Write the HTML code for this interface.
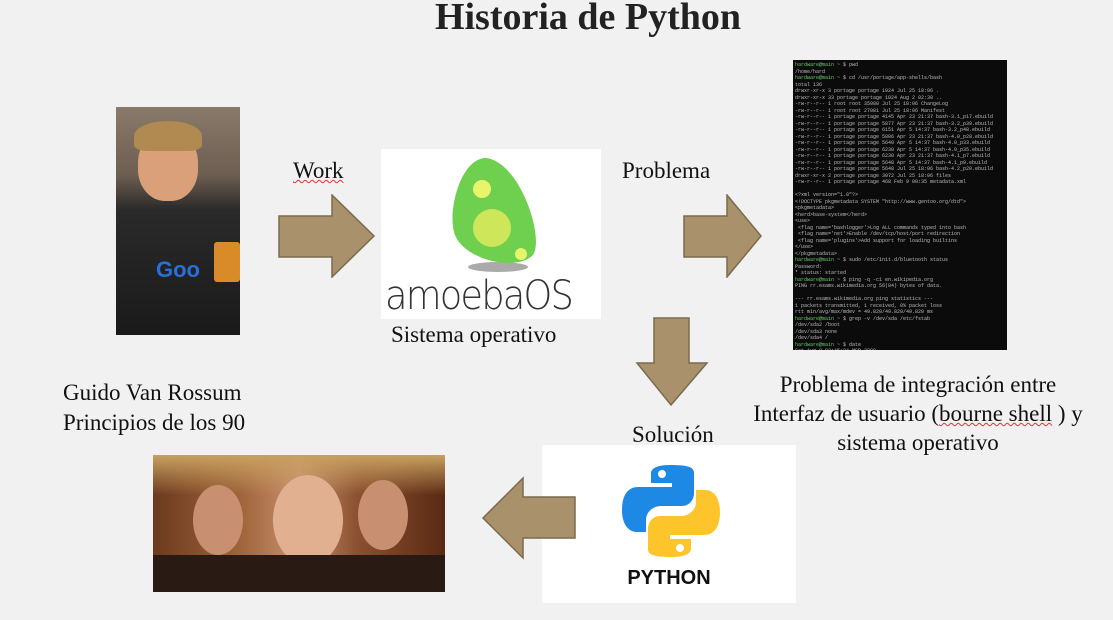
<!DOCTYPE html>
<html><head><meta charset="utf-8"><style>
body{margin:0;width:1113px;height:620px;background:#f1f1f1;position:relative;overflow:hidden;font-family:"Liberation Serif",serif;color:#111}
.t{position:absolute;font-size:23px;white-space:nowrap}
.a{position:absolute}
</style></head><body>
<div class="t" style="left:0;width:1176px;text-align:center;top:-5px;font-size:38px;font-weight:bold;color:#222">Historia de Python</div>

<div class="a" style="left:116px;top:107px;width:124px;height:228px;background:linear-gradient(180deg,#8a7a6a 0%,#6d5e52 30%,#2a2a2a 45%,#1a1a1a 100%)">
 <div class="a" style="left:22px;top:24px;width:60px;height:70px;border-radius:45%;background:#d9a07a"></div>
 <div class="a" style="left:18px;top:14px;width:68px;height:30px;border-radius:50% 50% 20% 20%;background:#b08a50"></div>
 <div class="a" style="left:40px;top:150px;color:#2a6fd8;font:bold 22px 'Liberation Sans',sans-serif">Goo</div>
 <div class="a" style="left:98px;top:135px;width:26px;height:40px;background:#d98b2a;border-radius:3px"></div>
</div>

<div class="t" style="left:293px;top:158px;text-decoration:underline wavy #d33 1px">Work</div>
<svg class="a" style="left:278px;top:194px" width="98" height="84"><polygon points="1,22 54,22 54,1 96,42 54,83 54,63 1,63" fill="#a8916b" stroke="#7b6a4e" stroke-width="1.5"/></svg>

<div class="a" style="left:381px;top:149px;width:220px;height:170px;background:#fff">
 <svg class="a" style="left:55px;top:5px" width="110" height="120"><ellipse cx="62" cy="113" rx="30" ry="5" fill="#555" opacity=".5"/>
 <path d="M50 4 C25 4 12 55 18 78 C25 105 78 118 96 102 C110 88 85 8 50 4Z" fill="#6fcf4f"/>
 <circle cx="56" cy="74" r="19" fill="#cde65a"/><circle cx="46" cy="35" r="9" fill="#e8f56a"/><circle cx="85" cy="100" r="6" fill="#e8f56a"/></svg>
 <div class="a" style="left:4px;top:124px;font:40px 'DejaVu Sans',sans-serif;font-weight:200;color:#333;letter-spacing:-2px;transform:scaleX(0.92);transform-origin:left">amoebaOS</div>
</div>
<div class="t" style="left:391px;top:322px">Sistema operativo</div>

<div class="t" style="left:622px;top:158px">Problema</div>
<svg class="a" style="left:683px;top:194px" width="80" height="84"><polygon points="1,22 44,22 44,1 78,42 44,83 44,63 1,63" fill="#a8916b" stroke="#7b6a4e" stroke-width="1.5"/></svg>

<div class="a" style="left:793px;top:60px;width:214px;height:290px;background:#0b0b0b;overflow:hidden;font:5px 'Liberation Mono',monospace;color:#bbb;line-height:6.5px;padding:2px;box-sizing:border-box">
<span style="color:#6c6">hardware@main</span> ~ $ pwd<br>/home/hard<br><span style="color:#6c6">hardware@main</span> ~ $ cd /usr/portage/app-shells/bash<br>total 136<br>drwxr-xr-x 3 portage portage 1024 Jul 25 18:06 .<br>drwxr-xr-x 33 portage portage 1024 Aug 2 02:30 ..<br>-rw-r--r-- 1 root root 35080 Jul 25 18:06 ChangeLog<br>-rw-r--r-- 1 root root 27081 Jul 25 18:06 Manifest<br>-rw-r--r-- 1 portage portage 4145 Apr 23 21:37 bash-3.1_p17.ebuild<br>-rw-r--r-- 1 portage portage 5877 Apr 23 21:37 bash-3.2_p39.ebuild<br>-rw-r--r-- 1 portage portage 6151 Apr 5 14:37 bash-3.2_p48.ebuild<br>-rw-r--r-- 1 portage portage 5806 Apr 23 21:37 bash-4.0_p28.ebuild<br>-rw-r--r-- 1 portage portage 5640 Apr 5 14:37 bash-4.0_p33.ebuild<br>-rw-r--r-- 1 portage portage 6230 Apr 5 14:37 bash-4.0_p35.ebuild<br>-rw-r--r-- 1 portage portage 6230 Apr 23 21:37 bash-4.1_p7.ebuild<br>-rw-r--r-- 1 portage portage 5648 Apr 5 14:37 bash-4.1_p9.ebuild<br>-rw-r--r-- 1 portage portage 5648 Jul 25 18:06 bash-4.2_p20.ebuild<br>drwxr-xr-x 2 portage portage 3072 Jul 25 18:06 files<br>-rw-r--r-- 1 portage portage 468 Feb 9 00:35 metadata.xml<br><br>&lt;?xml version="1.0"?&gt;<br>&lt;!DOCTYPE pkgmetadata SYSTEM "http://www.gentoo.org/dtd"&gt;<br>&lt;pkgmetadata&gt;<br>&lt;herd&gt;base-system&lt;/herd&gt;<br>&lt;use&gt;<br>&nbsp;&lt;flag name='bashlogger'&gt;Log ALL commands typed into bash<br>&nbsp;&lt;flag name='net'&gt;Enable /dev/tcp/host/port redirection<br>&nbsp;&lt;flag name='plugins'&gt;Add support for loading builtins<br>&lt;/use&gt;<br>&lt;/pkgmetadata&gt;<br><span style="color:#6c6">hardware@main</span> ~ $ sudo /etc/init.d/bluetooth status<br>Password:<br>* status: started<br><span style="color:#6c6">hardware@main</span> ~ $ ping -q -c1 en.wikipedia.org<br>PING rr.esams.wikimedia.org 56(84) bytes of data.<br><br>--- rr.esams.wikimedia.org ping statistics ---<br>1 packets transmitted, 1 received, 0% packet loss<br>rtt min/avg/max/mdev = 49.820/49.820/49.820 ms<br><span style="color:#6c6">hardware@main</span> ~ $ grep -v /dev/sda /etc/fstab<br>/dev/sda2 /boot<br>/dev/sda3 none<br>/dev/sda4 /<br><span style="color:#6c6">hardware@main</span> ~ $ date<br>Sat Aug 8 02:45:24 MSD 2009<br><span style="color:#6c6">hardware@main</span> ~ $ lsmod<br>Module Size Used by<br>rndis_wlan 23424 0<br>rndis_host 8696 1 rndis_wlan<br>cdc_ether 5672 1 rndis_host<br>usbnet 18688 3 rndis_wlan<br>parport_pc 38424 0<br>fglrx 2388128 20<br>parport 39648 1 parport_pc<br>i2c_i801 9316 0<br><span style="color:#6c6">hardware@main</span> ~ $ <span style="background:#6c6">&nbsp;</span>
</div>

<svg class="a" style="left:635px;top:317px" width="74" height="90"><polygon points="19,1 54,1 54,46 72,46 36,88 2,46 19,46" fill="#a8916b" stroke="#7b6a4e" stroke-width="1.5"/></svg>

<div class="t" style="left:740px;top:370px;width:356px;text-align:center;line-height:29px">Problema de integración entre<br>Interfaz de usuario (<span style="text-decoration:underline wavy #d33 1px">bourne shell</span> ) y<br>sistema operativo</div>

<div class="t" style="left:63px;top:378px;line-height:30px">Guido Van Rossum<br>Principios de los 90</div>

<div class="t" style="left:632px;top:422px">Solución</div>

<div class="a" style="left:542px;top:445px;width:254px;height:158px;background:#fff">
 <svg class="a" style="left:80px;top:17px" width="98" height="98" viewBox="0 0 98 98">
 <path d="M48 3 C28 3 29 11 29 11 L29 21 L50 21 L50 25 L16 25 C6 25 0 33 0 48 C0 63 7 70 15 70 L24 70 L24 58 C24 50 31 44 39 44 L60 44 C67 44 72 38 72 31 L72 11 C72 5 66 3 48 3Z" fill="#1e88e5"/>
 <path d="M50 95 C70 95 69 87 69 87 L69 77 L48 77 L48 73 L82 73 C92 73 98 65 98 50 C98 35 91 28 83 28 L74 28 L74 40 C74 48 67 54 59 54 L38 54 C31 54 26 60 26 67 L26 87 C26 93 32 95 50 95Z" fill="#fdc52b"/>
 <circle cx="40" cy="12" r="4" fill="#fff"/><circle cx="58" cy="86" r="4" fill="#fff"/></svg>
 <div class="a" style="left:0;width:254px;text-align:center;top:122px;font:bold 20px 'Liberation Sans',sans-serif;color:#111">PYTHON</div>
</div>

<svg class="a" style="left:481px;top:476px" width="96" height="84"><polygon points="2,42 42,2 42,21 94,21 94,62 42,62 42,82" fill="#a8916b" stroke="#7b6a4e" stroke-width="1.5"/></svg>

<div class="a" style="left:153px;top:455px;width:292px;height:137px;background:linear-gradient(90deg,#6b3a1e,#a0643a 30%,#c99070 50%,#8a5030 70%,#5a2a14);overflow:hidden">
 <div class="a" style="left:0;top:0;width:292px;height:40px;background:linear-gradient(180deg,#c8a060,transparent)"></div>
 <div class="a" style="left:120px;top:20px;width:70px;height:90px;border-radius:50%;background:#e0b090"></div>
 <div class="a" style="left:40px;top:30px;width:50px;height:70px;border-radius:50%;background:#c89070"></div>
 <div class="a" style="left:205px;top:25px;width:50px;height:70px;border-radius:50%;background:#c89070"></div>
 <div class="a" style="left:0;top:100px;width:292px;height:37px;background:#2a1a14"></div>
</div>
</body></html>
